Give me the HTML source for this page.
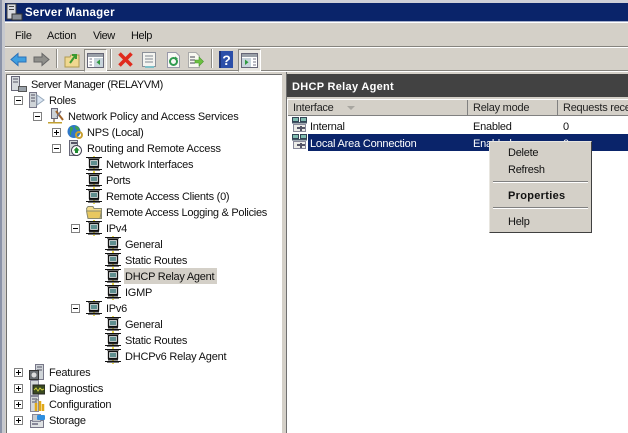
<!DOCTYPE html>
<html><head><meta charset="utf-8"><title>Server Manager</title>
<style>
html,body{margin:0;padding:0}
body{width:628px;height:433px;overflow:hidden;position:relative;background:#d4d0c8;font:11px/16px "Liberation Sans",sans-serif;color:#111}
div,svg{position:absolute}
.t{white-space:nowrap;letter-spacing:-.25px;transform:translateY(1px)}
.b{width:9px;height:9px;border:1px solid #808080;background:#fff;box-sizing:border-box}
.b:before{content:"";position:absolute;left:1px;top:3px;width:5px;height:1px;background:#000}
.p:after{content:"";position:absolute;left:3px;top:1px;width:1px;height:5px;background:#000}
.i{width:16px;height:16px}
.h{top:100px;height:16px;line-height:17px;white-space:nowrap;color:#222}
.sep{width:1px;height:19px;top:49px;background:#8c8a84;border-right:1px solid #fff}
.pr{top:49px;width:21px;height:21px;background:#e9e7e2;border:1px solid;border-color:#8c8a84 #fff #fff #8c8a84;box-sizing:content-box}
</style></head><body>
<svg width="0" height="0" style="left:0;top:0"><defs>
<symbol id="net" viewBox="0 0 16 16">
<rect x="7" y="0" width="2" height="16" fill="#e8d848"/>
<rect x="0" y="1" width="16" height="1" fill="#111"/><rect x="2" y="2" width="12" height="1" fill="#777"/>
<rect x="3.500" y="3.500" width="9" height="7" fill="#dfe6e6" stroke="#111" stroke-width="1.300"/>
<rect x="5" y="5" width="6" height="4" fill="#5f8f8f"/>
<rect x="3" y="11" width="10" height="1.500" fill="#222"/>
<rect x="0" y="13" width="16" height="1" fill="#111"/><rect x="2" y="14" width="12" height="1" fill="#777"/>
</symbol>
<symbol id="ifc" viewBox="0 0 16 16">
<rect x="0.500" y="0.500" width="6" height="4" fill="#7fbcb0" stroke="#345"/><rect x="8.500" y="0.500" width="6" height="4" fill="#7fbcb0" stroke="#345"/>
<rect x="0" y="5" width="15" height="1.500" fill="#456"/>
<rect x="1.500" y="7.500" width="12" height="7" fill="#ecece8" stroke="#889"/>
<path d="M5 11h8M9 9v5" stroke="#556" stroke-width="2" fill="none"/>
</symbol>
</defs></svg>

<!-- window frame -->
<div style="left:0;top:0;width:628px;height:3px;background:#cfd0d8"></div>
<div style="left:0;top:3px;width:628px;height:18px;background:#0a246a"></div>
<div style="left:0;top:21px;width:628px;height:1px;background:#a6b0cc"></div>
<div style="left:0;top:22px;width:628px;height:1px;background:#fff"></div>
<div style="left:0;top:46px;width:628px;height:1px;background:#85837e"></div>
<div style="left:0;top:47px;width:628px;height:1px;background:#fff"></div>
<div style="left:0;top:70px;width:628px;height:1px;background:#85837e"></div>
<div style="left:0;top:71px;width:628px;height:1px;background:#fff"></div>
<div style="left:0;top:0;width:5px;height:433px;background:#c6c8ce"></div>
<div style="left:0;top:0;width:2px;height:433px;background:#8b93a8"></div>

<!-- title -->
<svg style="left:6px;top:3px" width="17" height="18" viewBox="0 0 17 18">
<rect x="1" y="1" width="9" height="15" fill="#d8dbe0" stroke="#444"/><rect x="3" y="3" width="5" height="1" fill="#444"/><rect x="3" y="6" width="5" height="1" fill="#444"/>
<rect x="6" y="11" width="10" height="6" fill="#8a9098" stroke="#333"/>
</svg>
<div class="t" style="left:25px;top:4px;color:#fff;font-weight:bold;font-size:11.5px;letter-spacing:.25px">Server Manager</div>

<!-- menu -->
<div class="t" style="left:15px;top:27px">File</div>
<div class="t" style="left:47px;top:27px">Action</div>
<div class="t" style="left:93px;top:27px;letter-spacing:-.5px">View</div>
<div class="t" style="left:131px;top:27px;letter-spacing:-.4px">Help</div>

<!-- toolbar -->
<svg style="left:10px;top:51px" width="17" height="17" viewBox="0 0 17 17"><path d="M1 8.500L8 2.500V6H16V11H8V14.500Z" fill="#3f9fe0" stroke="#2a70b8"/></svg>
<svg style="left:33px;top:51px" width="17" height="17" viewBox="0 0 17 17"><path d="M16 8.500L9 2.500V6H1V11H9V14.500Z" fill="#8f8f8b" stroke="#666"/></svg>
<div class="sep" style="left:56px"></div>
<svg style="left:64px;top:51px" width="17" height="17" viewBox="0 0 17 17"><path d="M1 6H6L7 4H15V16H1Z" fill="#f0d890" stroke="#b09a50"/><path d="M6 12L11 5M8 4H12V8" stroke="#3a9a30" stroke-width="2" fill="none"/></svg>
<div class="pr" style="left:84px"></div>
<svg style="left:87px;top:53px" width="17" height="15" viewBox="0 0 17 15"><rect x=".5" y=".5" width="16" height="14" fill="#fff" stroke="#667"/><rect x="1" y="1" width="15" height="3" fill="#9aa0a8"/><rect x="7" y="5" width="9" height="9" fill="#c8d4dc"/><path d="M13 6.500V12L9.500 9.200Z" fill="#2f9a3f"/><path d="M2.500 6H5M2.500 9H5M2.500 12H5" stroke="#778"/></svg>
<div class="sep" style="left:110px"></div>
<svg style="left:117px;top:51px" width="17" height="17" viewBox="0 0 17 17"><path d="M2.500 2.500L14.500 14.500M14.500 2.500L2.500 14.500" stroke="#e02a1c" stroke-width="3.600"/></svg>
<svg style="left:141px;top:52px" width="16" height="16" viewBox="0 0 16 16"><rect x="1.500" y=".5" width="13" height="14" fill="#f4f4f0" stroke="#8b9098"/><path d="M4 4h8M4 7h8M4 10h8" stroke="#7f8890"/><rect x="4" y="14" width="9" height="2" fill="#7fc0c8"/></svg>
<svg style="left:166px;top:52px" width="15" height="16" viewBox="0 0 15 16"><path d="M1.500.5H10L13.500 4V15.500H1.500Z" fill="#f8f8f4" stroke="#99a"/><circle cx="7.500" cy="9.500" r="3.500" fill="none" stroke="#2f9a4f" stroke-width="2"/><path d="M9 4.500L12 6.500 9 8Z" fill="#2f9a4f"/></svg>
<svg style="left:187px;top:52px" width="17" height="16" viewBox="0 0 17 16"><path d="M1.500.5H9L12.500 4V15.500H1.500Z" fill="#f8f8f0" stroke="#aaa"/><path d="M3 5h5M3 8h5M3 11h5" stroke="#445"/><path d="M8 8H12V5L16.500 9.500 12 14V11H8Z" fill="#6cc040" stroke="#4a9a30" stroke-width=".6"/></svg>
<div class="sep" style="left:211px"></div>
<svg style="left:219px;top:51px" width="14" height="17" viewBox="0 0 14 17"><rect width="14" height="17" fill="#2c4fa8"/><rect x="0" y="0" width="2" height="17" fill="#1b3278"/><text x="7.500" y="14" font-family="Liberation Sans,sans-serif" font-weight="bold" font-size="14" text-anchor="middle" fill="#fff">?</text></svg>
<div class="pr" style="left:238px"></div>
<svg style="left:241px;top:53px" width="17" height="15" viewBox="0 0 17 15"><rect x=".5" y=".5" width="16" height="14" fill="#fff" stroke="#667"/><rect x="1" y="1" width="15" height="3" fill="#9aa0a8"/><rect x="1" y="5" width="9" height="9" fill="#c8d4dc"/><path d="M4 6.500V12L7.500 9.200Z" fill="#2f9a3f"/><path d="M12 6H15M12 9H15M12 12H15" stroke="#778"/></svg>

<!-- left pane -->
<div style="left:6px;top:74px;width:276px;height:359px;background:#fff;border-left:1px solid #6f6f6f;border-top:1px solid #6f6f6f;box-sizing:border-box"></div>

<!-- tree icons -->
<svg class="i" style="left:11px;top:76px" viewBox="0 0 16 16"><rect x=".5" y=".5" width="8" height="14" fill="#d6dade" stroke="#667"/><path d="M2 3h5M2 6h5" stroke="#556"/><rect x="7.500" y="10.500" width="8" height="5" fill="#9aa2aa" stroke="#555"/></svg>
<svg class="i" style="left:29px;top:92px" viewBox="0 0 16 16"><rect x=".5" y=".5" width="7" height="15" fill="#cfd4d8" stroke="#778"/><path d="M2 3h4M2 6h4M2 9h4" stroke="#556"/><path d="M8 3L15 8 8 13Z" fill="#dbe6f4" stroke="#9ab"/></svg>
<svg class="i" style="left:48px;top:108px" viewBox="0 0 16 16"><rect x="3.500" y=".5" width="6" height="10" fill="#ccd2d8" stroke="#667"/><path d="M6 11v3" stroke="#a98" stroke-width="2"/><rect x="0" y="14" width="14" height="1.500" fill="#c2a030"/><path d="M8 3L15 12" stroke="#a0642a" stroke-width="2"/><path d="M9 9L13 3" stroke="#778" stroke-width="1.500"/></svg>
<svg class="i" style="left:67px;top:124px" viewBox="0 0 16 16"><circle cx="7" cy="7.500" r="6.500" fill="#2f78c8"/><path d="M3 3C6 2 7 5 5 7S5 12 3 11ZM8 2C11 2 13 4 12 6 10 7 8 5 8 2Z" fill="#3fa050"/><circle cx="12" cy="11" r="3" fill="none" stroke="#c9a030" stroke-width="2"/></svg>
<svg class="i" style="left:67px;top:140px" viewBox="0 0 16 16"><rect x="2.500" y=".5" width="8" height="15" fill="#d4d8da" stroke="#667"/><rect x="4" y="2" width="6" height="2" fill="#556"/><circle cx="9.500" cy="10.500" r="5" fill="#fff" stroke="#445"/><path d="M9.500 7L12.500 10.500H11V13H8V10.500H6.500Z" fill="#1e8a2e"/></svg>
<svg class="i" style="left:86px;top:156px"><use href="#net"/></svg>
<svg class="i" style="left:86px;top:172px"><use href="#net"/></svg>
<svg class="i" style="left:86px;top:188px"><use href="#net"/></svg>
<svg class="i" style="left:86px;top:204px" viewBox="0 0 16 16"><path d="M.5 4.500L2 2.500H7L8 4.500H15.500V14.500H2Z" fill="#f2dc8c" stroke="#8a8a70"/><path d="M.5 7H15.500L14 14.500H2Z" fill="#e8c860" stroke="#8a8a70"/></svg>
<svg class="i" style="left:86px;top:220px"><use href="#net"/></svg>
<svg class="i" style="left:105px;top:236px"><use href="#net"/></svg>
<svg class="i" style="left:105px;top:252px"><use href="#net"/></svg>
<svg class="i" style="left:105px;top:268px"><use href="#net"/></svg>
<svg class="i" style="left:105px;top:284px"><use href="#net"/></svg>
<svg class="i" style="left:86px;top:300px"><use href="#net"/></svg>
<svg class="i" style="left:105px;top:316px"><use href="#net"/></svg>
<svg class="i" style="left:105px;top:332px"><use href="#net"/></svg>
<svg class="i" style="left:105px;top:348px"><use href="#net"/></svg>
<svg class="i" style="left:29px;top:364px" viewBox="0 0 16 16"><rect x="6.500" y=".5" width="8" height="15" fill="#cfd4d8" stroke="#778"/><path d="M8 3h5M8 6h5" stroke="#556"/><rect x=".5" y="6.500" width="9" height="9" fill="#6a6e72" stroke="#333"/><circle cx="5" cy="11" r="2.500" fill="#ddd"/></svg>
<svg class="i" style="left:29px;top:380px" viewBox="0 0 16 16"><rect x="1.500" y=".5" width="8" height="15" fill="#d4d8da" stroke="#889"/><rect x="4" y="5" width="12" height="9" fill="#3a4a20" stroke="#222"/><path d="M5 10l2-2 2 3 2-3 2 2 2-1" stroke="#d0d040" fill="none"/></svg>
<svg class="i" style="left:29px;top:396px" viewBox="0 0 16 16"><rect x="1.500" y=".5" width="8" height="15" fill="#d4d8da" stroke="#889"/><path d="M3 3h5M3 6h5" stroke="#556"/><path d="M7 7V15M11 5V15M14 8V15" stroke="#e0a818" stroke-width="2.500"/><path d="M6 5L10 3" stroke="#888"/></svg>
<svg class="i" style="left:29px;top:412px" viewBox="0 0 16 16"><rect x="1.500" y="8.500" width="13" height="7" fill="#dfe2e4" stroke="#778"/><rect x="3.500" y="2.500" width="8" height="7" fill="#c8ccd0" stroke="#889"/><rect x="8" y="3" width="8" height="5" rx="1" fill="#2f8fe0"/><rect x="3" y="11" width="6" height="2" fill="#889"/></svg>

<!-- expanders -->
<div class="b" style="left:14px;top:96px"></div>
<div class="b" style="left:33px;top:112px"></div>
<div class="b p" style="left:52px;top:128px"></div>
<div class="b" style="left:52px;top:144px"></div>
<div class="b" style="left:71px;top:224px"></div>
<div class="b" style="left:71px;top:304px"></div>
<div class="b p" style="left:14px;top:368px"></div>
<div class="b p" style="left:14px;top:384px"></div>
<div class="b p" style="left:14px;top:400px"></div>
<div class="b p" style="left:14px;top:416px"></div>

<!-- tree labels -->
<div class="t" style="left:31px;top:76px;letter-spacing:-.38px">Server Manager (RELAYVM)</div>
<div class="t" style="left:49px;top:92px">Roles</div>
<div class="t" style="left:68px;top:108px;letter-spacing:-.2px">Network Policy and Access Services</div>
<div class="t" style="left:87px;top:124px">NPS (Local)</div>
<div class="t" style="left:87px;top:140px;letter-spacing:-.2px">Routing and Remote Access</div>
<div class="t" style="left:106px;top:156px">Network Interfaces</div>
<div class="t" style="left:106px;top:172px">Ports</div>
<div class="t" style="left:106px;top:188px">Remote Access Clients (0)</div>
<div class="t" style="left:106px;top:204px;letter-spacing:-.28px">Remote Access Logging &amp; Policies</div>
<div class="t" style="left:106px;top:220px">IPv4</div>
<div class="t" style="left:125px;top:236px">General</div>
<div class="t" style="left:125px;top:252px">Static Routes</div>
<div style="left:124px;top:268px;width:93px;height:16px;background:#d4d0c8"></div>
<div class="t" style="left:125px;top:268px">DHCP Relay Agent</div>
<div class="t" style="left:125px;top:284px">IGMP</div>
<div class="t" style="left:106px;top:300px">IPv6</div>
<div class="t" style="left:125px;top:316px">General</div>
<div class="t" style="left:125px;top:332px">Static Routes</div>
<div class="t" style="left:125px;top:348px;letter-spacing:-.21px">DHCPv6 Relay Agent</div>
<div class="t" style="left:49px;top:364px">Features</div>
<div class="t" style="left:49px;top:380px">Diagnostics</div>
<div class="t" style="left:49px;top:396px">Configuration</div>
<div class="t" style="left:49px;top:412px">Storage</div>

<!-- right pane -->
<div style="left:286px;top:72px;width:342px;height:361px;background:#fff;border-left:1px solid #6f6f6f;box-sizing:border-box"></div>
<div style="left:287px;top:74px;width:341px;height:23px;background:#424242"></div>
<div style="left:287px;top:72px;width:341px;height:2px;background:#d4d0c8"></div>
<div style="left:287px;top:97px;width:341px;height:2px;background:#d4d0c8"></div>
<div class="t" style="left:292px;top:78px;color:#fff;font-weight:bold;letter-spacing:.3px">DHCP Relay Agent</div>

<div style="left:288px;top:99px;width:340px;height:17px;background:#d4d0c8;border-top:1px solid #fff;border-bottom:1px solid #808080;box-sizing:border-box"></div>
<div style="left:467px;top:100px;width:1px;height:15px;background:#808080"></div>
<div style="left:557px;top:100px;width:1px;height:15px;background:#808080"></div>
<div class="h t" style="left:293px;transform:none">Interface</div>
<div style="left:347px;top:106px;width:0;height:0;border-left:4px solid transparent;border-right:4px solid transparent;border-top:4px solid #a8a6a0"></div>
<div class="h t" style="left:473px;transform:none">Relay mode</div>
<div class="h t" style="left:563px;transform:none">Requests received</div>

<svg class="i" style="left:292px;top:117px"><use href="#ifc"/></svg>
<div class="t" style="left:310px;top:118px">Internal</div>
<div class="t" style="left:473px;top:118px">Enabled</div>
<div class="t" style="left:563px;top:118px">0</div>

<div style="left:308px;top:134px;width:320px;height:17px;background:#0a246a"></div>
<svg class="i" style="left:292px;top:134px"><use href="#ifc"/></svg>
<div class="t" style="left:310px;top:135px;color:#fff;letter-spacing:-.2px">Local Area Connection</div>
<div class="t" style="left:473px;top:135px;color:#fff">Enabled</div>
<div class="t" style="left:563px;top:135px;color:#fff">0</div>

<!-- context menu -->
<div style="left:489px;top:141px;width:103px;height:92px;background:#d4d0c8;border:1px solid;border-color:#e8e6e0 #404040 #404040 #e8e6e0;box-sizing:border-box"></div>
<div class="t" style="left:508px;top:144px">Delete</div>
<div class="t" style="left:508px;top:161px">Refresh</div>
<div style="left:493px;top:181px;width:95px;height:1px;background:#808080"></div>
<div style="left:493px;top:182px;width:95px;height:1px;background:#fff"></div>
<div class="t" style="left:508px;top:187px;font-weight:bold;letter-spacing:.3px">Properties</div>
<div style="left:493px;top:207px;width:95px;height:1px;background:#808080"></div>
<div style="left:493px;top:208px;width:95px;height:1px;background:#fff"></div>
<div class="t" style="left:508px;top:213px">Help</div>
</body></html>
